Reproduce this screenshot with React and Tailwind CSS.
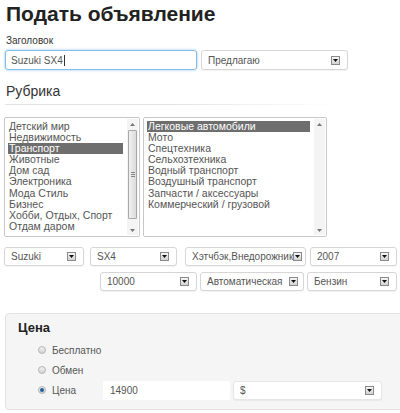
import React from "react";

const categories = [
  "Детский мир",
  "Недвижимость",
  "Транспорт",
  "Животные",
  "Дом сад",
  "Электроника",
  "Мода Стиль",
  "Бизнес",
  "Хобби, Отдых, Спорт",
  "Отдам даром",
];

const transport = [
  "Легковые автомобили",
  "Мото",
  "Спецтехника",
  "Сельхозтехника",
  "Водный транспорт",
  "Воздушный транспорт",
  "Запчасти / аксессуары",
  "Коммерческий / грузовой",
];

const Arrow = () => (
  <span className="flex h-[9px] w-[9px] shrink-0 items-center justify-center border border-[#8a8a8a] bg-gradient-to-b from-[#f6f6f6] to-[#d2d2d2]">
    <svg width="5" height="3" viewBox="0 0 5 3">
      <path d="M0 0h5L2.5 3z" fill="#111" />
    </svg>
  </span>
);

const Select = ({ value, className = "" }) => (
  <div
    className={`flex items-center rounded-[3px] border border-[#d6d6d6] bg-white pl-[6px] pr-[7px] shadow-[0_1px_1px_rgba(0,0,0,0.05)] ${className}`}
  >
    <span className="flex-1 overflow-hidden whitespace-nowrap text-[#555]">{value}</span>
    <Arrow />
  </div>
);

const Tri = ({ up }) => (
  <svg width="5" height="3" viewBox="0 0 5 3" className="mx-auto">
    <path d={up ? "M0 3h5L2.5 0z" : "M0 0h5L2.5 3z"} fill="#777" />
  </svg>
);

const Scrollbar = ({ thumb }) => (
  <div className="my-[1px] mr-[1px] flex w-[11px] flex-col bg-[#f4f4f4]">
    <div className="flex h-[10px] items-center">
      <Tri up />
    </div>
    <div className="flex flex-1 px-[1px] py-[1px]">
      {thumb && (
        <div className="flex h-[89px] w-full items-center justify-center rounded-[1px] border border-[#a8a8a8] bg-gradient-to-r from-[#f0f0f0] to-[#dcdcdc]">
          <div className="flex flex-col gap-[1px]">
            <span className="h-px w-[4px] bg-[#888]" />
            <span className="h-px w-[4px] bg-[#888]" />
            <span className="h-px w-[4px] bg-[#888]" />
          </div>
        </div>
      )}
    </div>
    <div className="flex h-[10px] items-center">
      <Tri />
    </div>
  </div>
);

const ListBox = ({ items, selected, className, thumb }) => (
  <div className={`flex h-[120px] rounded-[2px] border border-[#c8c8c8] bg-white ${className}`}>
    <ul className="flex-1 pl-[3px] pr-[4px] pt-[3px] text-[10.5px] leading-[11.1px] text-[#555]">
      {items.map((item) => (
        <li
          key={item}
          className={item === selected ? "bg-[#6e6e6e] pl-[1px] text-white" : "pl-[1px]"}
        >
          {item}
        </li>
      ))}
    </ul>
    <Scrollbar thumb={thumb} />
  </div>
);

const Radio = ({ checked, label }) => (
  <div className="flex h-[20px] items-center">
    <span className="flex h-[8px] w-[8px] items-center justify-center rounded-full border border-[#b5b5b5] bg-gradient-to-b from-[#f2f2f2] to-[#d2d2d2]">
      {checked && <span className="h-[4px] w-[4px] rounded-full bg-[#1f5f9a]" />}
    </span>
    <span className="ml-[6px] text-[10px] text-[#555]">{label}</span>
  </div>
);

export default function App() {
  return (
    <div className="h-[413px] w-[400px] overflow-hidden bg-white font-['Liberation_Sans',Arial,sans-serif]">
      <h1 className="mt-[1px] pl-[6px] text-[21px] font-bold leading-[26px] text-[#222]">
        Подать объявление
      </h1>

      <div className="mt-[7px] pl-[6px] text-[10px] leading-[13px] text-[#333]">Заголовок</div>

      <div className="mt-[3px] flex gap-[4px] pl-[5px] text-[10px]">
        <div className="flex h-[20px] w-[192px] items-center rounded-[3px] border border-[#7fbdea] pl-[5px] text-[#555] shadow-[0_0_3px_rgba(82,168,236,0.6)]">
          Suzuki SX4
          <span className="ml-[1px] h-[11px] w-px bg-[#333]" />
        </div>
        <Select value="Предлагаю" className="h-[20px] w-[147px]" />
      </div>

      <h2 className="mt-[11px] pl-[6px] text-[14px] leading-[20px] text-[#333]">Рубрика</h2>
      <div className="mt-[3px] ml-[5px] h-px w-[330px] bg-gradient-to-r from-[#e3e3e3] via-[#e3e3e3] to-white" />

      <div className="mt-[12px] flex gap-[3px] pl-[4px]">
        <ListBox items={categories} selected="Транспорт" className="w-[136px]" thumb />
        <ListBox items={transport} selected="Легковые автомобили" className="w-[184px]" />
      </div>

      <div className="mt-[10px] flex pl-[4px] text-[10px]">
        <Select value="Suzuki" className="h-[19px] w-[80px]" />
        <Select value="SX4" className="ml-[6px] h-[19px] w-[87px]" />
        <Select value="Хэтчбэк,Внедорожник" className="ml-[8px] h-[19px] w-[121px] !pr-[3px]" />
        <Select value="2007" className="ml-[4px] h-[19px] w-[87px]" />
      </div>
      <div className="mt-[6px] flex w-[397px] justify-end gap-[3px] text-[10px]">
        <Select value="10000" className="h-[19px] w-[97px]" />
        <Select value="Автоматическая" className="h-[19px] w-[104px] !pr-[5px]" />
        <Select value="Бензин" className="h-[19px] w-[90px]" />
      </div>

      <div className="mt-[22px] ml-[5px] w-[420px] rounded-[4px] border border-[#e3e3e3] bg-[#f5f5f5] pb-[9px] pl-[12px] pt-[6px]">
        <h3 className="text-[13px] font-bold leading-[16px] text-[#222]">Цена</h3>
        <div className="mt-[4px] pl-[20px]">
          <Radio label="Бесплатно" />
          <Radio label="Обмен" />
          <div className="flex h-[20px] items-center">
            <div className="w-[65px]">
              <Radio checked label="Цена" />
            </div>
            <div className="flex h-[19px] w-[127px] items-center rounded-[2px] bg-white pl-[7px] text-[10px] text-[#555]">
              14900
            </div>
            <Select value="$" className="ml-[3px] h-[19px] w-[149px] border-[#e6e6e6] text-[10px]" />
          </div>
        </div>
      </div>
    </div>
  );
}
